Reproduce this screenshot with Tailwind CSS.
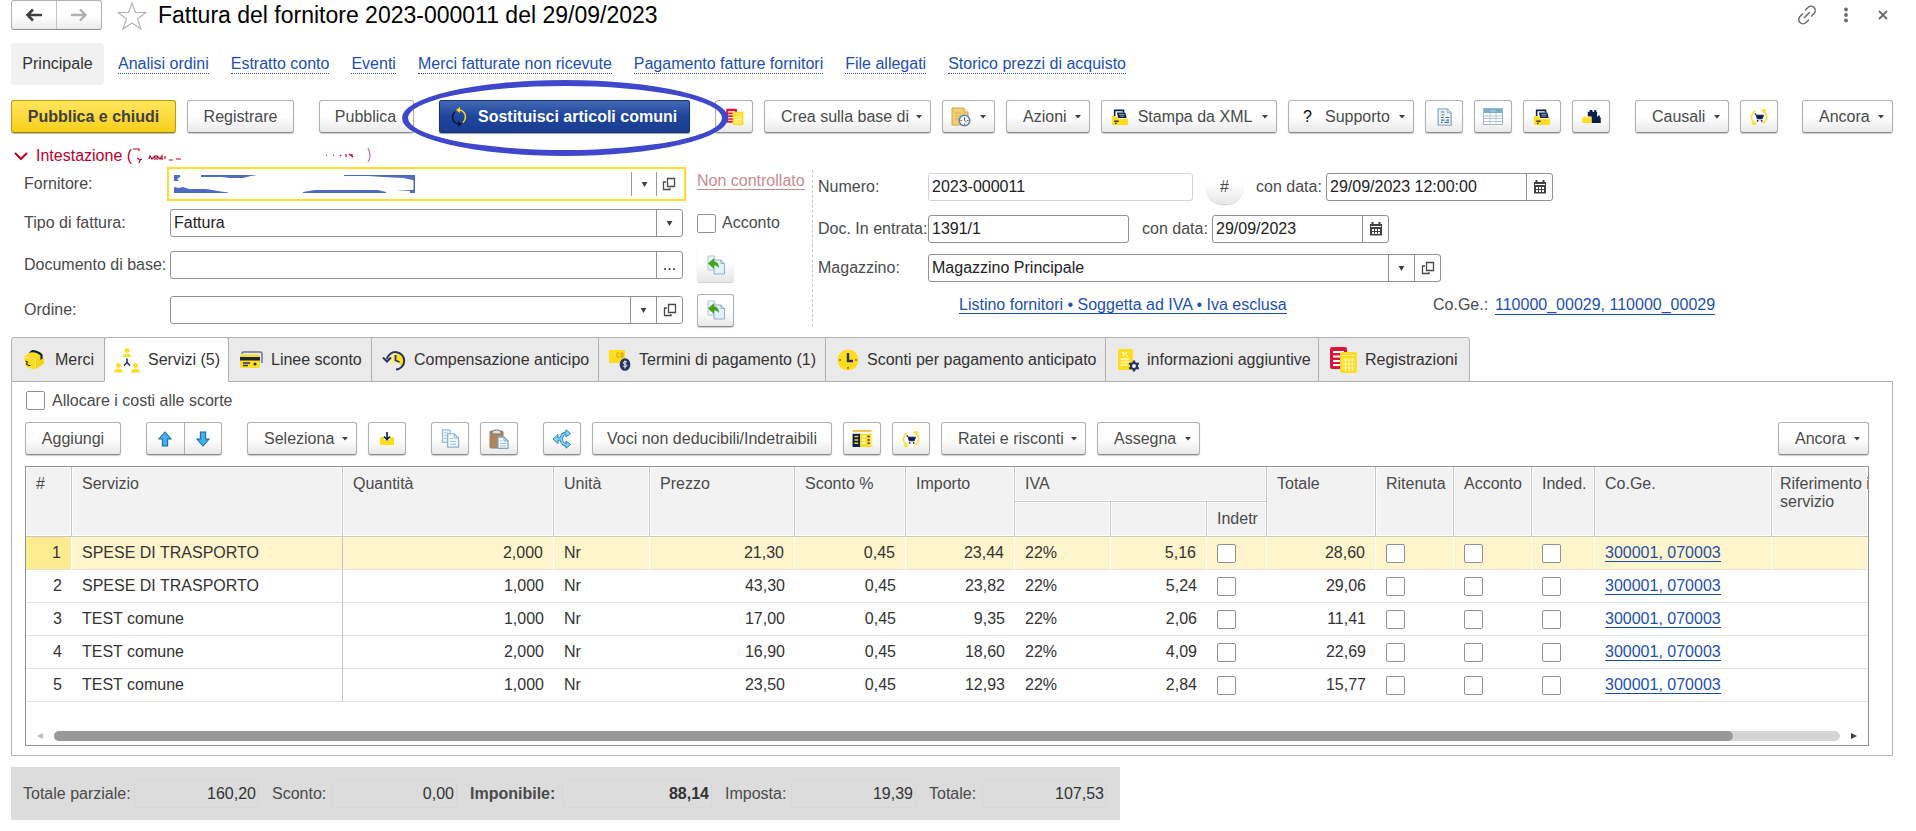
<!DOCTYPE html>
<html lang="it">
<head>
<meta charset="utf-8">
<title>Fattura del fornitore 2023-000011</title>
<script src="https://cdn.jsdelivr.net/npm/@tailwindcss/browser@4"></script>
</head>
<body class="bg-white font-['Liberation_Sans',Arial,sans-serif] text-base text-[#4a4a4a] leading-[18px] overflow-x-hidden">

<svg class="hidden" aria-hidden="true">
  <symbol id="caret" viewBox="0 0 6 4"><path d="M0 0h6L3 3.5z" fill="#404040"/></symbol>
  <symbol id="drop" viewBox="0 0 8 6"><path d="M0.5 0h7L4 6z" fill="#404040"/></symbol>
  <symbol id="open" viewBox="0 0 14 14"><path d="M5.500 1.500h7v8h-7zM4 5H1.500v7.500h6.500V11" fill="none" stroke="#4a4a4a" stroke-width="1.300"/></symbol>
  <symbol id="cal" viewBox="0 0 14 14"><path d="M1 2h12v11.500H1z" fill="#404040"/><path d="M3.500 0v3M10.500 0v3" stroke="#404040" stroke-width="2"/><path d="M2 4.500h10" stroke="#fff"/><path d="M3 7h2v2H3zM6 7h2v2H6zM9 7h2v2H9zM3 10h2v2H3zM6 10h2v2H6zM9 10h2v2H9z" fill="#fff"/></symbol>
  <symbol id="calc" viewBox="0 0 28 28"><rect x="1" y="1" width="17" height="22" rx="2" fill="#d9163a"/><path d="M4 6h11M4 10.500h8M4 15h8M4 19h7" stroke="#fff" stroke-width="1.800"/><rect x="11" y="6" width="17" height="21" rx="2" fill="#ffdc1e"/><path d="M13.500 9.500h12M13.500 14h12M13.500 18h12M13.500 22h12M16.500 12v13M20 12v13M23.500 12v13" stroke="#fff6b8" stroke-width="1.200"/></symbol>
  <symbol id="noteclock" viewBox="0 0 20 20"><path d="M1 1h12l4 4v13H1z" fill="#f0cf77" stroke="#d0a544"/><path d="M13 1v4h4" fill="#fff3cc" stroke="#d0a544"/><path d="M4 6h6M4 9h6M4 12h4" stroke="#d8b04e"/><circle cx="13.500" cy="13.500" r="5.300" fill="#eef4fa" stroke="#5f87ab" stroke-width="1.600"/><path d="M13.500 10.500v3l2 1.500" stroke="#456" fill="none"/><path d="M9.500 13.500h1.500M16 13.500h1.500M13.500 16.500v1.500" stroke="#d33"/></symbol>
  <symbol id="folder" viewBox="0 0 18 18"><path d="M3 8V1.500h10V4" fill="none" stroke="#0a1f4e" stroke-width="1.800"/><path d="M5.500 4H15l1.500 6H7z" fill="#0a1f4e"/><path d="M8 6h6M8.500 8H14" stroke="#aab6d2"/><path d="M0 8h5l2 3h11v7H0z" fill="#ffdc1e"/><path d="M2.500 13h5v1.500h-5zM3 15.500h3L4 17.500z" fill="#3c3c32"/></symbol>
  <symbol id="doc" viewBox="0 0 18 20"><path d="M2 1h10l4.500 4.500V19H2z" fill="#f1f7fb" stroke="#8fb0c8" stroke-width="1.600"/><path d="M12 1v4.500h4.500" fill="#cfe0ec" stroke="#8fb0c8"/><path d="M5 4.500h4M6 7.500h3M5 10.500h3M10 10.500h4M5 13.500h4M11 13.500h3M5 16h2M9 16h5" stroke="#3f6c8c" stroke-width="1.200"/></symbol>
  <symbol id="table" viewBox="0 0 20 17"><rect x=".5" y=".5" width="19" height="16" fill="#fff" stroke="#9fb6c6"/><path d="M1 1h18v4H1z" fill="#79aecf"/><path d="M1 8h18M1 10.500h18M1 13.500h18M7 5v11M13 5v11" stroke="#b4c8d4"/><path d="M7 3h6" stroke="#b7d3e4"/></symbol>
  <symbol id="lego" viewBox="0 0 20 14"><path d="M6 7V2h2V0h3v2h2V0h2v2h1v5h1V6h2v2h1v6H10V7z" fill="#0a1f4e"/><path d="M0 14V8h2V7h2v1h2V7h2v1h2v6z" fill="#ffdc1e"/></symbol>
  <symbol id="cart" viewBox="0 0 20 20"><path d="M6 3C1 6 0 12 4 16M14 17c5-3 6-9 2-13" fill="none" stroke="#ffe04a" stroke-width="2"/><path d="M12 2l6-1-2 5zM8 18l-6 1 2-5z" fill="#ffdc1e"/><path d="M5 6.500h1.500l1.500 5.500h5.500L15 8H7.500" fill="#0a1f4e" stroke="#0a1f4e"/><circle cx="8.500" cy="14.200" r="1" fill="#0a1f4e"/><circle cx="13" cy="14.200" r="1" fill="#0a1f4e"/></symbol>
  <symbol id="fill" viewBox="0 0 20 20"><path d="M2 1h7v5h3v9H2z" fill="#eef3f7" stroke="#b5c6d3"/><path d="M8 5h7l3.500 3.500V19H8z" fill="#e3f0f9" stroke="#8fb0c8"/><path d="M15 5v3.500h3.500" fill="none" stroke="#8fb0c8"/><path d="M2 8.500L8 3v3.500c3 0 5 2.500 5 6.500-1.500-2-3-2.500-5-2.500V14z" fill="#44a51c"/></symbol>
  <symbol id="copy" viewBox="0 0 20 20"><path d="M1.500 1h8v13h-8z" fill="#eaf2f8" stroke="#9cbad0" stroke-width="1.300"/><path d="M3 4h4M3 7h3M3 10h3" stroke="#a9c2d3"/><path d="M7 5h7l4.500 4.500V19H7z" fill="#f2f8fc" stroke="#8db1ca" stroke-width="1.300"/><path d="M14 5v4.500h4.500" fill="none" stroke="#8db1ca"/><path d="M9.500 10h3M9.500 13h6.500M9.500 16h6.500" stroke="#9cbad0"/></symbol>
  <symbol id="paste" viewBox="0 0 20 20"><rect x="1" y="2" width="13" height="17" rx="1" fill="#b0845b" stroke="#a17a55"/><path d="M3 3.500C4 0 11 0 12 3.500V5H3z" fill="#ddd" stroke="#777"/><path d="M9 8h6l4 4v7.500H9z" fill="#f2f8fc" stroke="#7fa5c2" stroke-width="1.300"/><path d="M15 8v4h4" fill="none" stroke="#7fa5c2"/><path d="M11 12h2M11 14.500h6M11 17h6" stroke="#9cbad0"/></symbol>
  <symbol id="share" viewBox="0 0 20 20"><path d="M5 10h4C10 5 12 4 15 4M9 10c1 5 3 6 6 6" fill="none" stroke="#1f86b8" stroke-width="3.400"/><path d="M14 .8L18.500 4.500 14 8zM14 12l4.500 3.500L14 19.200zM6 5.500L1 10l5 4.500z" fill="#8fd3f2" stroke="#1f86b8"/><path d="M5 10h4C10 5 12 4 15 4M9 10c1 5 3 6 6 6" fill="none" stroke="#8fd3f2" stroke-width="1.600"/></symbol>
  <symbol id="import" viewBox="0 0 14 13"><path d="M0 5h4v3h6V5h4v8H0z" fill="#ffdc1e"/><path d="M7 0v7M4 4.500l3 3 3-3" fill="none" stroke="#0a1f4e" stroke-width="1.600"/></symbol>
  <symbol id="cols" viewBox="0 0 20 18"><path d="M0 0h20v2H0z" fill="#f4c04a"/><path d="M0 4h8v14H0z" fill="#0a1f4e"/><path d="M8 4h12v14H8z" fill="#ffdc1e"/><path d="M2 7h4M2 10.500h4M2 14h4" stroke="#ffdc1e" stroke-width="1.600"/><path d="M10 7h4M10 10.500h4M10 14h4" stroke="#fff" stroke-width="1.600"/><path d="M16 7h2M16 10.500h2M16 14h2" stroke="#0a1f4e" stroke-width="1.600"/></symbol>
  <symbol id="up" viewBox="0 0 16 18"><path d="M8 1l7 8h-4v8H5V9H1z" fill="#45b0f0" stroke="#17689c" stroke-width="1.200"/></symbol>
  <symbol id="down" viewBox="0 0 16 18"><path d="M8 17L1 9h4V1h6v8h4z" fill="#45b0f0" stroke="#17689c" stroke-width="1.200"/></symbol>
  <symbol id="box" viewBox="0 0 22 22"><path d="M1 8L10 1l9 3.500L21 14l-9.500 6.500L3 18z" fill="#ffdc1e"/><path d="M12.500 9.500L20 5.500l1 9-8.500 6z" fill="#f6d117"/><path d="M1 8l11.500 2v10.500" fill="none" stroke="#fff0a0" stroke-width=".8"/><path d="M5.500 4C10 2 15 4 17.500 6.500V11l2-1.500V5.500C17 2.500 13 1 9 1z" fill="#0a1f4e"/><path d="M2.500 12l2 1-1 2 2 1.500h2" fill="none" stroke="#26355f" stroke-width="1.200"/></symbol>
  <symbol id="people" viewBox="0 0 26 26"><g fill="#ffdc1e"><circle cx="13" cy="3.500" r="2.400"/><path d="M8.800 10c0-4.500 8.400-4.500 8.400 0z"/><circle cx="4.500" cy="18.500" r="2.400"/><path d="M0 25.500c0-5 9-5 9 0z"/><circle cx="21.500" cy="18.500" r="2.400"/><path d="M17 25.500c0-5 9-5 9 0z"/></g><path d="M13 11.500v4l-3 3M13 15.500l3 3" fill="none" stroke="#26355f" stroke-width="1.600"/></symbol>
  <symbol id="card" viewBox="0 0 24 18"><path d="M3 3V2.500Q3 1 4.500 1H21q2 0 2 2v9" fill="none" stroke="#6a7391" stroke-width="1.500"/><rect x="1" y="3.500" width="20" height="13.500" rx="2" fill="#ffdc1e"/><path d="M1 6h20v3.500H1z" fill="#1b2543"/><path d="M4 12h7M4 14.500h5" stroke="#26355f" stroke-width="1.300"/><circle cx="16" cy="13" r="1.500" fill="#26355f"/></symbol>
  <symbol id="history" viewBox="0 0 24 22"><path d="M15 3a8 8 0 0 1 4 14l-5-6z" fill="#ffdc1e"/><path d="M14 4a7 7 0 0 0-7 7l7 6z" fill="#ffe98a"/><path d="M5 10A8.700 8.700 0 1 1 14 20.500" fill="none" stroke="#26355f" stroke-width="2"/><path d="M1 8.500l4 4 4-4" fill="none" stroke="#26355f" stroke-width="2"/><path d="M13.500 6v5.500l4 1.500" fill="none" stroke="#26355f" stroke-width="1.800"/></symbol>
  <symbol id="terms" viewBox="0 0 22 22"><path d="M0 1h16v13H0z" fill="#ffdc1e"/><path d="M10.500 4H8v4h2.500M12 4v4h2V4z" fill="none" stroke="#bfa210"/><ellipse cx="16" cy="15.500" rx="5.300" ry="6.300" fill="#26355f"/><path d="M18 13.500c-1-1.500-4-1-3.500.7.500 1.300 3 .8 3.300 2.200.2 1.500-2.800 1.800-3.800.4M16 11.500v8" fill="none" stroke="#fff"/></symbol>
  <symbol id="clock" viewBox="0 0 22 22"><circle cx="11" cy="11" r="10.500" fill="#ffdc1e"/><path d="M11 4v8h5" fill="none" stroke="#26355f" stroke-width="2.400"/><path d="M11 18v2M2 11h2M18 11h2" stroke="#26355f"/></symbol>
  <symbol id="infogear" viewBox="0 0 22 24"><rect x="1" y="1" width="15" height="21" rx="1.500" fill="#ffdc1e"/><path d="M3.500 14h9M3.500 17h7M3.500 11h9M6 8l4-4" stroke="#fff8c8" stroke-width="1.400"/><circle cx="6" cy="5" r="1" fill="#fff"/><circle cx="10" cy="8" r="1" fill="#fff"/><path d="M17 12.500v11M12.200 15.200l9.600 5.600M12.200 20.800l9.600-5.600" stroke="#26355f" stroke-width="2.400"/><circle cx="17" cy="18" r="3" fill="#fff" stroke="#26355f" stroke-width="2.200"/></symbol>
</svg>

<main class="relative pl-[11px] pr-[23px]">

  <header class="flex items-center h-[30px]">
    <div class="flex h-[30px] w-[91px] shrink-0 rounded-[3px] border border-[#b0b0b0] border-b-[#8c8c8c] bg-linear-to-b from-white from-50% to-[#ebebeb] divide-x divide-[#c4c4c4]">
      <button aria-label="Indietro" class="flex-1 grid place-items-center"><svg class="w-[18px] h-3.5" viewBox="0 0 18 14"><path d="M17 7H3M8 1.500L2.500 7 8 12.500" fill="none" stroke="#404040" stroke-width="2.600"/></svg></button>
      <button aria-label="Avanti" class="flex-1 grid place-items-center"><svg class="w-[18px] h-3.5" viewBox="0 0 18 14"><path d="M1 7h14M10 1.500L15.500 7 10 12.500" fill="none" stroke="#b0b0b0" stroke-width="2.400"/></svg></button>
    </div>
    <button aria-label="Preferiti" class="ml-[15px] shrink-0"><svg class="w-[30px] h-[29px]" viewBox="0 0 30 29"><path d="M15 2l3.500 9.500h10.500l-8.500 6.500 3.500 10L15 22l-9 6 3.500-10L1 11.500h10.500z" fill="#fff" stroke="#b4b4b4" stroke-width="1.200"/></svg></button>
    <h1 class="ml-[11px] text-[23px] leading-7 text-black whitespace-nowrap">Fattura del fornitore 2023-000011 del 29/09/2023</h1>
    <div class="ml-auto flex items-center gap-[21px] pr-0.5">
      <button aria-label="Copia collegamento"><svg class="w-5 h-5" viewBox="0 0 20 20"><path d="M8 5.500l3-3a3.800 3.800 0 0 1 6 6l-3 3M12 14.500l-3 3a3.800 3.800 0 0 1-6-6l3-3M7 13l6-6" fill="none" stroke="#6a6a6a" stroke-width="1.500"/></svg></button>
      <button aria-label="Altro"><svg class="w-4 h-4" viewBox="0 0 16 16"><circle cx="8" cy="2.500" r="1.900" fill="#6a6a6a"/><circle cx="8" cy="8" r="1.900" fill="#6a6a6a"/><circle cx="8" cy="13.500" r="1.900" fill="#6a6a6a"/></svg></button>
      <button aria-label="Chiudi"><svg class="w-4 h-4" viewBox="0 0 16 16"><path d="M4 4l8 8M12 4l-8 8" stroke="#6a6a6a" stroke-width="1.800"/></svg></button>
    </div>
  </header>

  <nav class="mt-[13px] flex items-center gap-[22px] h-[42px] text-[#1d4fb0] whitespace-nowrap">
    <span class="-mr-2 flex h-full w-[93px] items-center justify-center rounded-[4px] bg-[#f1f1f1] text-[#333]">Principale</span>
    <a href="#" class="border-b border-dotted border-[#1d4fb0]">Analisi ordini</a>
    <a href="#" class="border-b border-dotted border-[#1d4fb0]">Estratto conto</a>
    <a href="#" class="border-b border-dotted border-[#1d4fb0]">Eventi</a>
    <a href="#" class="border-b border-dotted border-[#1d4fb0]">Merci fatturate non ricevute</a>
    <a href="#" class="border-b border-dotted border-[#1d4fb0]">Pagamento fatture fornitori</a>
    <a href="#" class="border-b border-dotted border-[#1d4fb0]">File allegati</a>
    <a href="#" class="border-b border-dotted border-[#1d4fb0]">Storico prezzi di acquisto</a>
  </nav>

  <div class="relative mt-[15px] flex h-[33px] gap-[11px] whitespace-nowrap">
    <button class="w-[165px] rounded-[3px] border border-[#b79b18] border-b-[#94800f] bg-linear-to-b from-[#ffe65a] to-[#f7ce0c] font-bold text-[#404040] shadow-[0_1px_1px_#bbb]">Pubblica e chiudi</button>
    <button class="w-[107px] rounded-[3px] border border-[#b0b0b0] border-b-[#8c8c8c] bg-linear-to-b from-white from-50% to-[#e9e9e9] shadow-[0_1px_1px_#ccc]">Registrare</button>
    <button class="ml-3.5 w-[95px] pr-0.5 rounded-[3px] border border-[#b0b0b0] border-b-[#8c8c8c] bg-linear-to-b from-white from-50% to-[#e9e9e9] shadow-[0_1px_1px_#ccc]">Pubblica</button>
    <button class="ml-3.5 w-[251px] flex items-center gap-2.5 pl-2.5 rounded-[2px] border border-[#16357c] bg-linear-to-b from-[#4468b4] via-[#1f459b] to-[#1a3d90] font-bold text-white shadow-[0_1px_1px_#999]"><svg class="w-[18px] h-5" viewBox="0 0 18 20"><path d="M9 3c4.500 0 6.500 4 6.500 7 0 2-1 4-2.500 5.500" fill="none" stroke="#ffdc1e" stroke-width="1.500"/><path d="M10 0L6 3l4 3z" fill="#ffdc1e"/><path d="M9 17c-4.500 0-6.500-4-6.500-7 0-2 1-4 2.500-5.500" fill="none" stroke="#0a1533" stroke-width="1.400"/><path d="M8 14l4 3-4 3z" fill="#0a1533"/></svg>Sostituisci articoli comuni</button>
    <button aria-label="Registrazioni" class="ml-3.5 w-[38px] grid place-items-center rounded-[3px] border border-[#b0b0b0] border-b-[#8c8c8c] bg-linear-to-b from-white from-50% to-[#e9e9e9] shadow-[0_1px_1px_#ccc]"><svg class="w-[19px] h-[18px]"><use href="#calc"/></svg></button>
    <button class="w-[167px] flex items-center justify-between pl-4 pr-2 rounded-[3px] border border-[#b0b0b0] border-b-[#8c8c8c] bg-linear-to-b from-white from-50% to-[#e9e9e9] shadow-[0_1px_1px_#ccc]">Crea sulla base di<svg class="w-1.5 h-1"><use href="#caret"/></svg></button>
    <button aria-label="Promemoria" class="w-[53px] flex items-center justify-between pl-2 pr-2 rounded-[3px] border border-[#b0b0b0] border-b-[#8c8c8c] bg-linear-to-b from-white from-50% to-[#e9e9e9] shadow-[0_1px_1px_#ccc]"><svg class="w-5 h-5"><use href="#noteclock"/></svg><svg class="w-1.5 h-1"><use href="#caret"/></svg></button>
    <button class="w-[84px] flex items-center justify-between pl-4 pr-2 rounded-[3px] border border-[#b0b0b0] border-b-[#8c8c8c] bg-linear-to-b from-white from-50% to-[#e9e9e9] shadow-[0_1px_1px_#ccc]">Azioni<svg class="w-1.5 h-1"><use href="#caret"/></svg></button>
    <button class="w-[176px] flex items-center justify-between pl-2.5 pr-2 rounded-[3px] border border-[#b0b0b0] border-b-[#8c8c8c] bg-linear-to-b from-white from-50% to-[#e9e9e9] shadow-[0_1px_1px_#ccc]"><svg class="w-4 h-4"><use href="#folder"/></svg><span>Stampa da XML</span><svg class="w-1.5 h-1"><use href="#caret"/></svg></button>
    <button class="w-[126px] flex items-center justify-between pl-3.5 pr-2 rounded-[3px] border border-[#b0b0b0] border-b-[#8c8c8c] bg-linear-to-b from-white from-50% to-[#e9e9e9] shadow-[0_1px_1px_#ccc]"><b class="font-normal text-black">?</b><span class="ml-1">Supporto</span><svg class="w-1.5 h-1"><use href="#caret"/></svg></button>
    <button aria-label="Documento" class="w-[38px] grid place-items-center rounded-[3px] border border-[#b0b0b0] border-b-[#8c8c8c] bg-linear-to-b from-white from-50% to-[#e9e9e9] shadow-[0_1px_1px_#ccc]"><svg class="w-[17px] h-[18px]"><use href="#doc"/></svg></button>
    <button aria-label="Tabella" class="w-[38px] grid place-items-center rounded-[3px] border border-[#b0b0b0] border-b-[#8c8c8c] bg-linear-to-b from-white from-50% to-[#e9e9e9] shadow-[0_1px_1px_#ccc]"><svg class="w-5 h-[17px]"><use href="#table"/></svg></button>
    <button aria-label="Archivio" class="w-[38px] grid place-items-center rounded-[3px] border border-[#b0b0b0] border-b-[#8c8c8c] bg-linear-to-b from-white from-50% to-[#e9e9e9] shadow-[0_1px_1px_#ccc]"><svg class="w-4 h-4"><use href="#folder"/></svg></button>
    <button aria-label="Componenti" class="w-[38px] grid place-items-center rounded-[3px] border border-[#b0b0b0] border-b-[#8c8c8c] bg-linear-to-b from-white from-50% to-[#e9e9e9] shadow-[0_1px_1px_#ccc]"><svg class="w-[19px] h-[13px]"><use href="#lego"/></svg></button>
    <button class="ml-3.5 w-[94px] flex items-center justify-between pl-4 pr-2 rounded-[3px] border border-[#b0b0b0] border-b-[#8c8c8c] bg-linear-to-b from-white from-50% to-[#e9e9e9] shadow-[0_1px_1px_#ccc]">Causali<svg class="w-1.5 h-1"><use href="#caret"/></svg></button>
    <button aria-label="Aggiorna acquisti" class="w-[38px] grid place-items-center rounded-[3px] border border-[#b0b0b0] border-b-[#8c8c8c] bg-linear-to-b from-white from-50% to-[#e9e9e9] shadow-[0_1px_1px_#ccc]"><svg class="w-[18px] h-[18px]"><use href="#cart"/></svg></button>
    <button class="ml-auto w-[91px] flex items-center justify-between pl-4 pr-2 rounded-[3px] border border-[#b0b0b0] border-b-[#8c8c8c] bg-linear-to-b from-white from-50% to-[#e9e9e9] shadow-[0_1px_1px_#ccc]">Ancora<svg class="w-1.5 h-1"><use href="#caret"/></svg></button>
    <div class="pointer-events-none absolute left-[391px] -top-5 h-[76px] w-[326px] rounded-[50%] border-[6px] border-[#3f48cc]"></div>
  </div>

  <div class="mt-3 flex h-[22px] items-center text-[#b8002c]">
    <button class="flex items-center gap-2 pl-[3px] text-[#b8002c]"><svg class="w-3.5 h-2" viewBox="0 0 14 8"><path d="M1 1l6 6 6-6" fill="none" stroke="#c00028" stroke-width="2"/></svg>Intestazione (</button>
    <svg class="w-[240px] h-5" viewBox="0 0 240 20" aria-hidden="true"><path d="M1 3h6v2M5 12l3 2-1 3M8 14l2-1M17 13l1-3 2 3 3-3v4M25 14v-4l3 3 2-3v4M33 13v-3M37 14h4M44 13h5M194 9h1M201 9h1M208 9l1 1M214 8v3M217 8l4 3M220 8v2" fill="none" stroke="#b8002c" stroke-width="1.200"/><path d="M236 2q4 8 0 14" fill="none" stroke="#c46bd0" stroke-width="1.200"/></svg>
  </div>

  <section class="grid grid-cols-[minmax(0,801px)_minmax(0,1fr)]">
    <div class="pl-[13px] pr-[9px]">
      <div class="flex h-[34px] items-center">
        <label for="forn" class="w-[143px] shrink-0">Fornitore:</label>
        <div class="relative flex h-[34px] flex-1 items-stretch border-2 border-[#ffdc28] py-[3px]">
          <input id="forn" class="min-w-0 flex-1 outline-none">
          <svg class="pointer-events-none absolute left-[5px] top-1.5 h-[18px] w-[241px]" viewBox="0 0 241 18" aria-hidden="true"><path d="M0 0h6v2l-3 2 2 2H0zM27 0h56l-6 1-8 2H56l-8-1H27zM170 0h71v18h-5v-2l-14-1h17V5l-10-2-20-1-15-1h-24zM0 12l5 1 4-1 6 2h17l12 2 10 1.500v.5H0zM129 17l12-2h63l8 2v1h-83z" fill="#4f6bc4"/><path d="M215 5.500h24.500v9H205z" fill="#fff"/></svg>
          <button aria-label="Elenco fornitori" class="w-[25px] grid place-items-center border-l border-[#9a9a9a]"><svg class="w-[7px] h-[5px]"><use href="#drop"/></svg></button>
          <button aria-label="Apri fornitore" class="w-[28px] pr-1 grid place-items-center border-l border-[#9a9a9a]"><svg class="w-3.5 h-3.5"><use href="#open"/></svg></button>
        </div>
        <div class="ml-[11px] w-[106px] shrink-0 pb-1.5 whitespace-nowrap"><a href="#" class="border-b border-[#c58c8c] text-[#c58c8c]">Non controllato</a></div>
      </div>
      <div class="mt-[5px] flex h-[34px] items-center">
        <label for="tipo" class="w-[146px] shrink-0">Tipo di fattura:</label>
        <div class="relative flex h-7 flex-1 rounded-[3px] border border-[#919191]">
          <select id="tipo" class="flex-1 appearance-none pl-[3px] text-[#222] outline-none"><option>Fattura</option></select>
          <span class="pointer-events-none absolute inset-y-0 right-0 w-[26px] grid place-items-center border-l border-[#919191]"><svg class="w-[7px] h-[5px]"><use href="#drop"/></svg></span>
        </div>
        <label class="ml-3.5 flex w-[106px] shrink-0 items-center gap-1.5"><input type="checkbox" class="h-[19px] w-[19px] appearance-none rounded-[2px] border border-[#919191]">Acconto</label>
      </div>
      <div class="mt-2 flex h-[34px] items-center">
        <label for="docbase" class="w-[146px] shrink-0 whitespace-nowrap">Documento di base:</label>
        <div class="flex h-7 flex-1 rounded-[3px] border border-[#919191]">
          <input id="docbase" class="min-w-0 flex-1 pl-[3px] outline-none">
          <button aria-label="Scegli documento" class="w-[26px] border-l border-[#919191] text-[#222]">...</button>
        </div>
        <div class="ml-3.5 w-[106px] shrink-0"><button aria-label="Compila da documento" class="h-[33px] w-[37px] grid place-items-center rounded-[3px] bg-linear-to-b from-white from-40% to-[#e6e6e6] shadow-[0_1px_1px_#ccc]"><svg class="w-5 h-5"><use href="#fill"/></svg></button></div>
      </div>
      <div class="mt-[11px] flex h-[34px] items-center">
        <label for="ordine" class="w-[146px] shrink-0">Ordine:</label>
        <div class="flex h-7 flex-1 rounded-[3px] border border-[#919191]">
          <input id="ordine" class="min-w-0 flex-1 pl-[3px] outline-none">
          <button aria-label="Elenco ordini" class="w-[26px] grid place-items-center border-l border-[#919191]"><svg class="w-[7px] h-[5px]"><use href="#drop"/></svg></button>
          <button aria-label="Apri ordine" class="w-[26px] grid place-items-center border-l border-[#919191]"><svg class="w-3.5 h-3.5"><use href="#open"/></svg></button>
        </div>
        <div class="ml-3.5 w-[106px] shrink-0"><button aria-label="Compila da ordine" class="h-[33px] w-[37px] grid place-items-center rounded-[3px] border border-[#b0b0b0] border-b-[#8c8c8c] bg-linear-to-b from-white from-50% to-[#e9e9e9] shadow-[0_1px_1px_#ccc]"><svg class="w-5 h-5"><use href="#fill"/></svg></button></div>
      </div>
    </div>

    <div class="mt-[3px] border-l border-dashed border-[#c8c8c8] pl-[5px] whitespace-nowrap">
      <div class="flex h-[34px] items-center">
        <label for="num" class="w-[110px] shrink-0">Numero:</label>
        <input id="num" value="2023-000011" readonly class="h-7 w-[265px] rounded-[3px] border border-[#d2d2d2] pl-[3px] text-[#222] outline-none">
        <button class="ml-[13px] h-[33px] w-[37px] rounded-full bg-linear-to-b from-white from-40% to-[#e6e6e6] shadow-[0_1px_1px_#ccc]">#</button>
        <label for="data1" class="ml-[13px] w-[70px]">con data:</label>
        <div class="flex h-7 w-[227px] rounded-[3px] border border-[#919191]">
          <input id="data1" value="29/09/2023 12:00:00" class="min-w-0 flex-1 pl-[3px] text-[#222] outline-none">
          <button aria-label="Calendario" class="w-[26px] grid place-items-center border-l border-[#919191]"><svg class="w-3.5 h-3.5"><use href="#cal"/></svg></button>
        </div>
      </div>
      <div class="mt-2 flex h-[34px] items-center">
        <label for="docin" class="w-[110px] shrink-0">Doc. In entrata:</label>
        <input id="docin" value="1391/1" class="h-7 w-[201px] rounded-[3px] border border-[#919191] pl-[3px] text-[#222] outline-none">
        <label for="data2" class="ml-[13px] w-[70px]">con data:</label>
        <div class="flex h-7 w-[177px] rounded-[3px] border border-[#919191]">
          <input id="data2" value="29/09/2023" class="min-w-0 flex-1 pl-[3px] text-[#222] outline-none">
          <button aria-label="Calendario" class="w-[26px] grid place-items-center border-l border-[#919191]"><svg class="w-3.5 h-3.5"><use href="#cal"/></svg></button>
        </div>
      </div>
      <div class="mt-[5px] flex h-[34px] items-center">
        <label for="mag" class="w-[110px] shrink-0">Magazzino:</label>
        <div class="flex h-7 w-[513px] rounded-[3px] border border-[#919191]">
          <input id="mag" value="Magazzino Principale" class="min-w-0 flex-1 pl-[3px] text-[#222] outline-none">
          <button aria-label="Elenco magazzini" class="w-[26px] grid place-items-center border-l border-[#919191]"><svg class="w-[7px] h-[5px]"><use href="#drop"/></svg></button>
          <button aria-label="Apri magazzino" class="w-[26px] grid place-items-center border-l border-[#919191]"><svg class="w-3.5 h-3.5"><use href="#open"/></svg></button>
        </div>
      </div>
      <div class="mt-[3px] flex h-[34px] items-center text-[#1d4fb0]">
        <div class="w-[474px] pl-[141px]"><a href="#" class="border-b border-[#1d4fb0]">Listino fornitori • Soggetta ad IVA • Iva esclusa</a></div>
        <span class="ml-[141px] w-[62px] text-[#4a4a4a]">Co.Ge.:</span>
        <a href="#" class="border-b border-[#1d4fb0]">110000_00029, 110000_00029</a>
      </div>
    </div>
  </section>

  <div role="tablist" class="relative z-10 mt-2.5 flex h-[45px] text-[#333] whitespace-nowrap">
    <button role="tab" class="w-[94px] flex items-center gap-2.5 pl-[11px] border border-[#b0b0b0] rounded-tl-[3px] bg-[#eaeaea]"><svg class="w-[22px] h-[22px]"><use href="#box"/></svg>Merci</button>
    <button role="tab" aria-selected="true" class="-ml-px w-[125px] flex items-center gap-2 pl-[9px] border border-[#b0b0b0] border-b-white rounded-t-[3px] bg-white"><svg class="w-[26px] h-[26px]"><use href="#people"/></svg>Servizi (5)</button>
    <button role="tab" class="-ml-px w-[144px] flex items-center gap-2 pl-2.5 border border-[#b0b0b0] bg-[#eaeaea]"><svg class="w-6 h-[18px]"><use href="#card"/></svg>Linee sconto</button>
    <button role="tab" class="-ml-px w-[228px] flex items-center gap-2 pl-2.5 border border-[#b0b0b0] bg-[#eaeaea]"><svg class="w-6 h-[22px]"><use href="#history"/></svg>Compensazione anticipo</button>
    <button role="tab" class="-ml-px w-[228px] flex items-center gap-2 pl-2.5 border border-[#b0b0b0] bg-[#eaeaea]"><svg class="w-[22px] h-[22px]"><use href="#terms"/></svg>Termini di pagamento (1)</button>
    <button role="tab" class="-ml-px w-[281px] flex items-center gap-2 pl-[11px] border border-[#b0b0b0] bg-[#eaeaea]"><svg class="w-[22px] h-[22px]"><use href="#clock"/></svg>Sconti per pagamento anticipato</button>
    <button role="tab" class="-ml-px w-[214px] flex items-center gap-2 pl-[11px] border border-[#b0b0b0] bg-[#eaeaea]"><svg class="w-[22px] h-6"><use href="#infogear"/></svg>informazioni aggiuntive</button>
    <button role="tab" class="-ml-px w-[152px] flex items-center gap-2 pl-2.5 border border-[#b0b0b0] rounded-tr-[3px] bg-[#eaeaea]"><svg class="w-7 h-7"><use href="#calc"/></svg>Registrazioni</button>
  </div>

  <section class="-mt-px border border-[#b0b0b0] pl-[13px] pr-[23px] pt-[9px] pb-[9px]">
    <label class="flex w-fit h-[19px] items-center gap-[7px] pl-px"><input type="checkbox" class="h-[19px] w-[19px] appearance-none rounded-[2px] border border-[#919191]">Allocare i costi alle scorte</label>

    <div class="mt-3 flex h-[33px] gap-[11px] whitespace-nowrap">
      <button class="w-24 rounded-[3px] border border-[#b0b0b0] border-b-[#8c8c8c] bg-linear-to-b from-white from-50% to-[#e9e9e9] shadow-[0_1px_1px_#ccc]">Aggiungi</button>
      <div class="ml-3.5 flex w-[76px] divide-x divide-[#b0b0b0] rounded-[3px] border border-[#b0b0b0] border-b-[#8c8c8c] bg-linear-to-b from-white from-50% to-[#e9e9e9] shadow-[0_1px_1px_#ccc]">
        <button aria-label="Sposta su" class="flex-1 grid place-items-center"><svg class="w-3.5 h-4"><use href="#up"/></svg></button>
        <button aria-label="Sposta giù" class="flex-1 grid place-items-center"><svg class="w-3.5 h-4"><use href="#down"/></svg></button>
      </div>
      <button class="ml-3.5 w-[110px] flex items-center justify-between pl-4 pr-2 rounded-[3px] border border-[#b0b0b0] border-b-[#8c8c8c] bg-linear-to-b from-white from-50% to-[#e9e9e9] shadow-[0_1px_1px_#ccc]">Seleziona<svg class="w-1.5 h-1"><use href="#caret"/></svg></button>
      <button aria-label="Importa" class="w-[38px] grid place-items-center rounded-[3px] border border-[#b0b0b0] border-b-[#8c8c8c] bg-linear-to-b from-white from-50% to-[#e9e9e9] shadow-[0_1px_1px_#ccc]"><svg class="w-3.5 h-[13px]"><use href="#import"/></svg></button>
      <button aria-label="Copia" class="ml-3.5 w-[38px] grid place-items-center rounded-[3px] border border-[#b0b0b0] border-b-[#8c8c8c] bg-linear-to-b from-white from-50% to-[#e9e9e9] shadow-[0_1px_1px_#ccc]"><svg class="w-[19px] h-[19px]"><use href="#copy"/></svg></button>
      <button aria-label="Incolla" class="w-[38px] grid place-items-center rounded-[3px] border border-[#b0b0b0] border-b-[#8c8c8c] bg-linear-to-b from-white from-50% to-[#e9e9e9] shadow-[0_1px_1px_#ccc]"><svg class="w-5 h-5"><use href="#paste"/></svg></button>
      <button aria-label="Ripartisci" class="ml-3.5 w-[38px] grid place-items-center rounded-[3px] border border-[#b0b0b0] border-b-[#8c8c8c] bg-linear-to-b from-white from-50% to-[#e9e9e9] shadow-[0_1px_1px_#ccc]"><svg class="w-5 h-5"><use href="#share"/></svg></button>
      <button class="w-[240px] rounded-[3px] border border-[#b0b0b0] border-b-[#8c8c8c] bg-linear-to-b from-white from-50% to-[#e9e9e9] shadow-[0_1px_1px_#ccc]">Voci non deducibili/Indetraibili</button>
      <button aria-label="Colonne" class="w-[38px] grid place-items-center rounded-[3px] border border-[#b0b0b0] border-b-[#8c8c8c] bg-linear-to-b from-white from-50% to-[#e9e9e9] shadow-[0_1px_1px_#ccc]"><svg class="w-5 h-[17px]"><use href="#cols"/></svg></button>
      <button aria-label="Aggiorna acquisti" class="w-[38px] grid place-items-center rounded-[3px] border border-[#b0b0b0] border-b-[#8c8c8c] bg-linear-to-b from-white from-50% to-[#e9e9e9] shadow-[0_1px_1px_#ccc]"><svg class="w-[18px] h-[18px]"><use href="#cart"/></svg></button>
      <button class="w-[145px] flex items-center justify-between pl-4 pr-2 rounded-[3px] border border-[#b0b0b0] border-b-[#8c8c8c] bg-linear-to-b from-white from-50% to-[#e9e9e9] shadow-[0_1px_1px_#ccc]">Ratei e risconti<svg class="w-1.5 h-1"><use href="#caret"/></svg></button>
      <button class="w-[103px] flex items-center justify-between pl-4 pr-2 rounded-[3px] border border-[#b0b0b0] border-b-[#8c8c8c] bg-linear-to-b from-white from-50% to-[#e9e9e9] shadow-[0_1px_1px_#ccc]">Assegna<svg class="w-1.5 h-1"><use href="#caret"/></svg></button>
      <button class="ml-auto w-[91px] flex items-center justify-between pl-4 pr-2 rounded-[3px] border border-[#b0b0b0] border-b-[#8c8c8c] bg-linear-to-b from-white from-50% to-[#e9e9e9] shadow-[0_1px_1px_#ccc]">Ancora<svg class="w-1.5 h-1"><use href="#caret"/></svg></button>
    </div>

    <div class="mt-[11px] overflow-hidden border border-[#919191]">
      <table class="w-full table-fixed border-separate border-spacing-0 whitespace-nowrap">
        <colgroup>
          <col class="w-[46px]"><col class="w-[271px]"><col class="w-[211px]"><col class="w-[96px]"><col class="w-[145px]"><col class="w-[111px]"><col class="w-[109px]"><col class="w-[96px]"><col class="w-[96px]"><col class="w-[60px]"><col class="w-[109px]"><col class="w-[78px]"><col class="w-[78px]"><col class="w-[63px]"><col class="w-[177px]"><col>
        </colgroup>
        <thead class="text-left align-top text-[#4a4a4a] [&_th]:border-b [&_th]:border-r [&_th]:border-[#c6c6c6] [&_th]:bg-[#f2f2f2] [&_th]:px-2.5 [&_th]:pt-2 [&_th]:font-normal [&_th]:shadow-[inset_0_0_0_1px_#fff]">
          <tr class="h-[35px]">
            <th rowspan="2">#</th><th rowspan="2">Servizio</th><th rowspan="2">Quantità</th><th rowspan="2">Unità</th><th rowspan="2">Prezzo</th><th rowspan="2">Sconto %</th><th rowspan="2">Importo</th><th colspan="3">IVA</th><th rowspan="2">Totale</th><th rowspan="2">Ritenuta</th><th rowspan="2">Acconto</th><th rowspan="2">Inded.</th><th rowspan="2">Co.Ge.</th><th rowspan="2" class="border-r-0! pl-2! pr-0!">Riferimento i<br>servizio</th>
          </tr>
          <tr class="h-[35px]"><th></th><th></th><th>Indetr</th></tr>
        </thead>
        <tbody id="rows" class="text-[#333]"></tbody>
      </table>
      <div class="mt-7 mb-1 flex h-[11px] items-center pl-[11px] pr-[11px]">
        <svg class="h-2 w-1.5 shrink-0" viewBox="0 0 6 8"><path d="M6 1v6L0 4z" fill="#bdbdbd"/></svg>
        <div class="ml-[11px] mr-[11px] h-2.5 flex-1 rounded-full bg-[#d5d5d5]"><div class="h-2.5 w-[94%] rounded-full bg-[#999]"></div></div>
        <svg class="h-2 w-1.5 shrink-0" viewBox="0 0 6 8"><path d="M0 1v6l6-3z" fill="#404040"/></svg>
      </div>
    </div>
  </section>

  <footer class="mt-[11px] flex h-[53px] w-fit items-center bg-[#dcdcdc] pl-3 pr-[13px] whitespace-nowrap">
    <label for="t1" class="w-[111px]">Totale parziale:</label><input id="t1" readonly value="160,20" class="h-7 w-[125px] rounded-[3px] border border-[#d7d7d7] pr-0.5 text-right text-[#333]">
    <label for="t2" class="ml-[13px] w-[59px]">Sconto:</label><input id="t2" readonly value="0,00" class="h-7 w-[126px] rounded-[3px] border border-[#d7d7d7] pr-0.5 text-right text-[#333]">
    <label for="t3" class="ml-[13px] w-[92px] font-bold">Imponibile:</label><input id="t3" readonly value="88,14" class="h-7 w-[150px] rounded-[3px] border border-[#d7d7d7] pr-0.5 text-right font-bold text-[#333]">
    <label for="t4" class="ml-[13px] w-[66px]">Imposta:</label><input id="t4" readonly value="19,39" class="h-7 w-[125px] rounded-[3px] border border-[#d7d7d7] pr-0.5 text-right text-[#333]">
    <label for="t5" class="ml-[13px] w-[53px]">Totale:</label><input id="t5" readonly value="107,53" class="h-7 w-[125px] rounded-[3px] border border-[#d7d7d7] pr-0.5 text-right text-[#333]">
  </footer>
</main>

<script>
  const data = [
    ['SPESE DI TRASPORTO', '2,000', '21,30', '23,44', '5,16', '28,60'],
    ['SPESE DI TRASPORTO', '1,000', '43,30', '23,82', '5,24', '29,06'],
    ['TEST comune', '1,000', '17,00', '9,35', '2,06', '11,41'],
    ['TEST comune', '2,000', '16,90', '18,60', '4,09', '22,69'],
    ['TEST comune', '1,000', '23,50', '12,93', '2,84', '15,77']
  ];
  const box = name => `<input type="checkbox" aria-label="${name}" class="block h-[19px] w-[19px] appearance-none rounded-[2px] border border-[#919191] bg-white">`;
  document.getElementById('rows').innerHTML = data.map(([name, qty, price, amount, vat, total], i) => {
    const on = i === 0;
    const row = on
      ? 'h-[33px] bg-[#fff5cc] [&_td]:border-r [&_td]:border-r-white'
      : 'h-[33px]';
    const td = 'border-b border-b-[#e2e2e2] px-2.5';
    const num = 'border-b border-b-[#e2e2e2] px-2.5 text-right';
    return `<tr class="${row}">
      <td class="${on ? 'border-b border-b-[#e2e2e2] px-2.5 text-right bg-[#ffeb8f]' : num}">${i + 1}</td>
      <td class="border-b border-b-[#e2e2e2] border-r border-r-[#c6c6c6]! px-2.5">${name}</td>
      <td class="${num}">${qty}</td><td class="${td}">Nr</td><td class="${num}">${price}</td><td class="${num}">0,45</td>
      <td class="${num}">${amount}</td><td class="${td}">22%</td><td class="${num}">${vat}</td><td class="${td}">${box('Indetraibile')}</td>
      <td class="${num}">${total}</td><td class="${td}">${box('Ritenuta')}</td><td class="${td}">${box('Acconto')}</td><td class="${td}">${box('Indeducibile')}</td>
      <td class="${td}"><a href="#" class="border-b border-[#1d4fb0] text-[#1d4fb0]">300001, 070003</a></td><td class="${td}"></td>
    </tr>`;
  }).join('');
</script>
</body>
</html>
